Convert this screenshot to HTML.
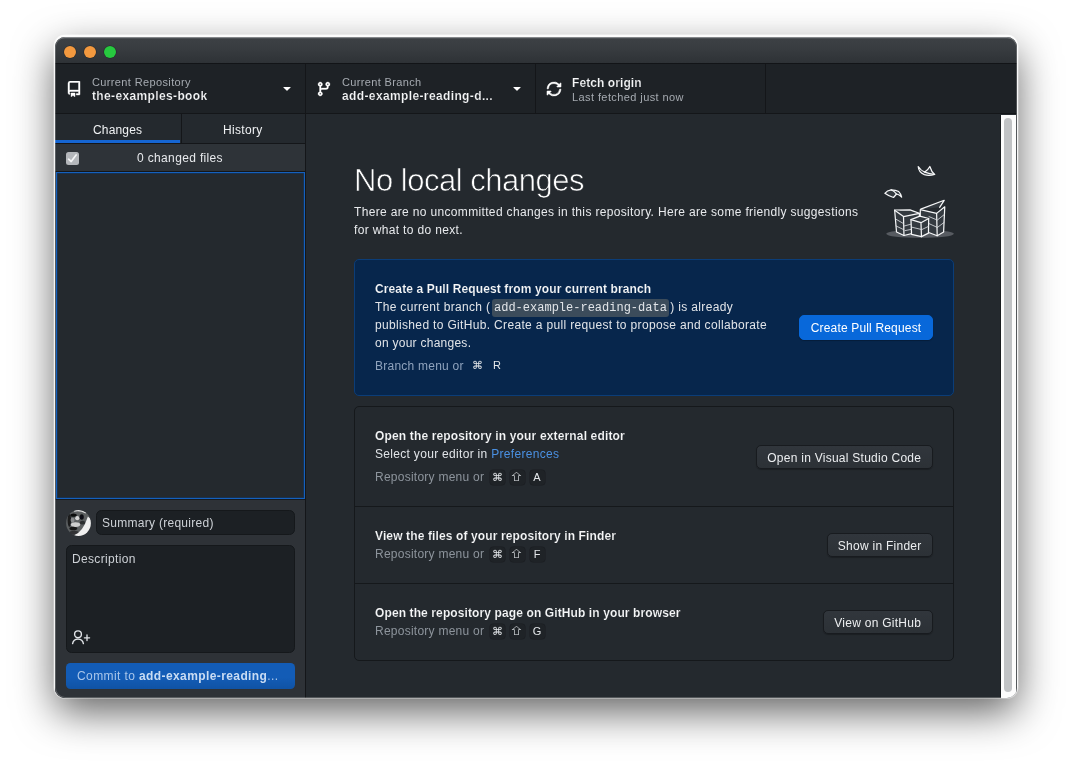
<!DOCTYPE html>
<html><head><meta charset="utf-8">
<style>
*{box-sizing:border-box;margin:0;padding:0}
html,body{width:1072px;height:772px;overflow:hidden;background:#fff}
body{font-family:"Liberation Sans",sans-serif;font-size:12px;color:#e1e4e8;position:relative}
.abs{position:absolute}
.t{position:absolute;white-space:nowrap;line-height:1}
#win{will-change:transform;position:absolute;left:55px;top:37px;width:962px;height:661px;border-radius:10px;background:#24292e;overflow:hidden;}
#shadow{position:absolute;left:55px;top:37px;width:962px;height:661px;border-radius:10px;box-shadow:0 -1.2px 0 1px rgba(255,255,255,.8),0 -.8px 0 1.6px rgba(255,255,255,.4),0 14px 40px rgba(0,0,0,.62)}
#titlebar{left:0;top:0;width:962px;height:27px;z-index:3;background:linear-gradient(#6a6e72 0,#5a5e62 1px,#3c4044 2px,#393d41 10px,#2e3236 100%);border-bottom:1.5px solid #121417}
.tl{position:absolute;top:8.7px;width:12.5px;height:12.5px;border-radius:50%;box-shadow:0 0 0 .5px rgba(0,0,0,.35)}
#toolbar{left:0;top:26px;width:962px;height:51px;background:#1e2226;border-bottom:1px solid #141619}
.sep{position:absolute;top:0;width:1px;height:50px;background:#141619}
.lbl{color:#a6abb1;font-size:11px}
.val{color:#f6f7f8;font-weight:bold;font-size:12px;-webkit-text-stroke:.18px #1e2226}

#tabs{left:0;top:77px;width:250px;height:29px;background:#24292e;border-bottom:1px solid #141619}
#main{left:250px;top:77px;width:696px;height:584px;background:#24292e;border-left:1px solid #141619}
#side{left:0;top:77px;width:250px;height:584px;background:#24292e}
#cf{left:0;top:30px;width:250px;height:28px;background:#2e3338;border-bottom:1px solid #141619}
#list{left:1px;top:58px;width:249px;height:327px;border:1px solid #1560bd;box-shadow:inset 0 0 0 .5px #0d3a70;background:#24292e}
.inp{position:absolute;background:#1c2024;border:1px solid #15181b;border-radius:5.5px}
.card{position:absolute;border-radius:5px}
.btn{position:absolute;height:25px;border-radius:5px;background:linear-gradient(#31363c,#2c3136);border:1px solid #181b1f;color:#eceef0;font-size:12px;text-align:center;line-height:23px;white-space:nowrap;box-shadow:0 1px 1px rgba(0,0,0,.25)}
.b{font-weight:bold;color:#f6f7f8;-webkit-text-stroke:.12px #24292e}
.sec{color:#8d949c}
kbd{font-family:"Liberation Sans",sans-serif;font-size:11px;color:#d1d5da}
.k{position:absolute;width:15px;height:15px;border-radius:3.5px;background:#1f2327;box-shadow:0 0 0 .5px #1a1d21;color:#e4e7ea;font-size:11px;line-height:15px;text-align:center}
.sh{display:inline-block;font-family:"Noto Sans CJK JP",sans-serif;font-size:9px;font-weight:bold;transform:translateY(-1px) scale(1.55,1.0);line-height:15px}
#sb{left:946px;top:78px;width:15px;height:583px;background:#fcfcfc;box-shadow:-1px 0 0 #191c1f}
#thumb{left:3px;top:3px;width:8px;height:574px;border-radius:4px;background:#c1c3c5}
#stroke{position:absolute;left:55px;top:37px;width:962px;height:661px;border-radius:10px;box-shadow:inset 0 0 0 1px rgba(255,255,255,.22);pointer-events:none;z-index:5}
</style></head><body>
<div id="shadow"></div>
<div id="win">
 <div id="titlebar" class="abs">
  <div class="tl" style="left:8.7px;background:#f3993f"></div>
  <div class="tl" style="left:28.7px;background:#f3993f"></div>
  <div class="tl" style="left:48.7px;background:#27c93f"></div>
 </div>
 <div id="toolbar" class="abs">
  <div class="sep" style="left:250px"></div>
  <div class="sep" style="left:480px"></div>
  <div class="sep" style="left:710px"></div>

  <svg class="abs" style="left:11px;top:18px" width="16" height="16" viewBox="0 0 16 16" fill="#fff" stroke="#fff" stroke-width=".4" stroke-linejoin="round"><path fill-rule="evenodd" d="M2 2.5A2.5 2.5 0 014.5 0h8.75a.75.75 0 01.75.75v12.5a.75.75 0 01-.75.75h-2.5a.75.75 0 110-1.5h1.75v-2h-8a1 1 0 00-.714 1.7.75.75 0 01-1.072 1.05A2.495 2.495 0 012 11.5v-9zm10.5-1V9h-8c-.356 0-.694.074-1 .208V2.5a1 1 0 011-1h8zM5 12.25v3.25a.25.25 0 00.4.2l1.45-1.087a.25.25 0 01.3 0L8.6 15.7a.25.25 0 00.4-.2v-3.25a.25.25 0 00-.25-.25h-3.5a.25.25 0 00-.25.25z"/></svg>
  <svg class="abs" style="left:224px;top:17px" width="16" height="16" viewBox="0 0 16 16" fill="#fff"><path d="M4.427 7.427l3.396 3.396a.25.25 0 00.354 0l3.396-3.396A.25.25 0 0011.396 7H4.604a.25.25 0 00-.177.427z"/></svg>
  <svg class="abs" style="left:261px;top:17.5px" width="16" height="16" viewBox="0 0 16 16" fill="#fff" stroke="#fff" stroke-width=".3" stroke-linejoin="round"><path fill-rule="evenodd" d="M11.75 2.5a.75.75 0 100 1.5.75.75 0 000-1.5zm-2.25.75a2.25 2.25 0 113 2.122V6A2.5 2.5 0 0110 8.5H6a1 1 0 00-1 1v1.128a2.251 2.251 0 11-1.5 0V5.372a2.25 2.25 0 111.5 0v1.836A2.492 2.492 0 016 7h4a1 1 0 001-1v-.628A2.25 2.25 0 019.5 3.25zM4.25 12a.75.75 0 100 1.5.75.75 0 000-1.5zM3.5 3.25a.75.75 0 111.5 0 .75.75 0 01-1.5 0z"/></svg>
  <svg class="abs" style="left:454px;top:17px" width="16" height="16" viewBox="0 0 16 16" fill="#fff"><path d="M4.427 7.427l3.396 3.396a.25.25 0 00.354 0l3.396-3.396A.25.25 0 0011.396 7H4.604a.25.25 0 00-.177.427z"/></svg>
  <svg class="abs" style="left:490.8px;top:17.7px;transform:scaleX(-1)" width="16" height="16" viewBox="0 0 16 16" fill="#fff" stroke="#fff" stroke-width=".55" stroke-linejoin="round"><path fill-rule="evenodd" d="M8 2.5a5.487 5.487 0 00-4.131 1.869l1.204 1.204A.25.25 0 014.896 6H1.25A.25.25 0 011 5.75V2.104a.25.25 0 01.427-.177l1.38 1.38A7.001 7.001 0 0114.95 7.16a.75.75 0 11-1.49.178A5.501 5.501 0 008 2.5zM1.705 8.005a.75.75 0 01.834.656 5.501 5.501 0 009.592 2.97l-1.204-1.204a.25.25 0 01.177-.427h3.646a.25.25 0 01.25.25v3.646a.25.25 0 01-.427.177l-1.38-1.38A7.001 7.001 0 011.05 8.84a.75.75 0 01.656-.834z"/></svg>
  <div class="t lbl" id="l1" style="letter-spacing:0.37px;left:37px;top:14px">Current Repository</div>
  <div class="t val" id="v1" style="letter-spacing:0.36px;left:37px;top:27px">the-examples-book</div>
  <div class="t lbl" id="l2" style="letter-spacing:0.35px;left:287px;top:14px">Current Branch</div>
  <div class="t val" id="v2" style="letter-spacing:0.375px;left:287px;top:27px">add-example-reading-d...</div>
  <div class="t val" id="v3" style="letter-spacing:0.08px;left:517px;top:14px">Fetch origin</div>
  <div class="t lbl" id="l3" style="letter-spacing:0.41px;left:517px;top:29px">Last fetched just now</div>
 </div>

 <div id="side" class="abs">
  <div id="tabsrow" class="abs" style="left:0;top:0;width:250px;height:30px;border-bottom:1px solid #141619">
   <div class="abs" style="left:125.5px;top:0;width:1px;height:29px;background:#141619"></div>
   <div class="abs" style="left:0;top:25.7px;width:125px;height:3.3px;background:#1565d2"></div>
   <div class="t" id="tab1" style="letter-spacing:0.17px;left:38px;top:10px;font-size:12px;color:#f0f2f4">Changes</div>
   <div class="t" id="tab2" style="letter-spacing:0.33px;left:168px;top:10px;font-size:12px;color:#f0f2f4">History</div>
  </div>
  <div id="cf" class="abs">
   <div class="abs" style="left:11px;top:8px;width:13px;height:13px;border-radius:2.5px;background:#b4b7bb"><svg class="abs" style="left:0;top:0" width="13" height="13" viewBox="0 0 13 13"><path d="M2.6 7.2l2.6 2.3 4.9-6.6" fill="none" stroke="#f4f5f6" stroke-width="1.7" stroke-linecap="round" stroke-linejoin="round"/></svg></div>
   <div class="t" id="cft" style="letter-spacing:0.35px;left:82px;top:8px;font-size:12px;color:#e8eaed">0 changed files</div>
  </div>
  <div id="list" class="abs"></div>
  <div class="abs" id="cmarea" style="left:0;top:385px;width:250px;height:199px;background:#2e3237;border-top:1px solid #181b1f"></div>
  <svg class="abs" id="avatar" style="left:11px;top:395.5px" width="25" height="26" viewBox="140 130 500 525">
   <defs><clipPath id="avc"><ellipse cx="390" cy="392" rx="250" ry="262"/></clipPath><filter id="avb" x="-20%" y="-20%" width="140%" height="140%"><feGaussianBlur stdDeviation="11"/></filter></defs>
   <g clip-path="url(#avc)"><g filter="url(#avb)">
    <rect x="100" y="100" width="600" height="600" fill="#5b5e61"/>
    <path d="M300 150Q420 120 540 190" stroke="#dcdcdc" stroke-width="30" fill="none"/>
    <ellipse cx="205" cy="340" rx="35" ry="130" fill="#1c1d1f"/>
    <ellipse cx="290" cy="235" rx="65" ry="32" fill="#0d0e0f"/>
    <ellipse cx="455" cy="270" rx="42" ry="55" fill="#101112"/>
    <ellipse cx="365" cy="295" rx="42" ry="42" fill="#d6d6d6"/>
    <ellipse cx="270" cy="330" rx="40" ry="45" fill="#8a8c8e"/>
    <ellipse cx="470" cy="385" rx="55" ry="40" fill="#2c2d2f"/>
    <ellipse cx="330" cy="425" rx="95" ry="50" fill="#cfcfcf"/>
    <ellipse cx="285" cy="505" rx="80" ry="36" fill="#151617"/>
    <ellipse cx="300" cy="590" rx="90" ry="40" fill="#303234"/>
    <path d="M290 645Q480 580 580 260Q680 330 650 480Q590 660 400 672Z" fill="#f0f0f0"/>
   </g></g></svg>
  <div class="inp" style="left:41px;top:396px;width:199px;height:25px"><div class="t" id="sum" style="letter-spacing:0.28px;left:5px;top:6px;font-size:12px;color:#cdd1d6">Summary (required)</div></div>
  <div class="inp" style="left:11px;top:431px;width:229px;height:108px"><div class="t" id="desc" style="letter-spacing:0.34px;left:5px;top:7px;font-size:12px;color:#cdd1d6">Description</div><svg class="abs" style="left:4px;top:83px" width="22" height="18" viewBox="0 0 22 18" fill="none" stroke="#e1e4e8" stroke-width="1.4" stroke-linecap="round"><circle cx="7" cy="5.3" r="3.4"/><path d="M1.6 14.6a5.5 5.5 0 0 1 10.8 0"/><path d="M13.4 8.8h5.2M16 6v5.6" stroke-width="1.3"/></svg></div>
  <div class="abs" id="commit" style="left:11px;top:549px;width:229px;height:26px;border-radius:4.5px;background:linear-gradient(#135cb6,#135cb6 55%,#1053a5);"><div class="t" id="ct" style="letter-spacing:0.4px;left:11px;top:6.8px;font-size:12px;color:#a9c6ea">Commit to <b style="color:#c9dcf3">add-example-reading</b>...</div></div>
 </div>
 <div id="main" class="abs">
  <div class="t" id="h1" style="letter-spacing:-.49px;left:48px;top:51px;font-size:31px;color:#fff;-webkit-text-stroke:.7px #24292e">No local changes</div>
  <div class="t" id="p1" style="letter-spacing:0.34px;left:48px;top:92px;font-size:12px;color:#e8eaed">There are no uncommitted changes in this repository. Here are some friendly suggestions</div>
  <div class="t" id="p2" style="letter-spacing:0.34px;left:48px;top:110px;font-size:12px;color:#e8eaed">for what to do next.</div>


  <svg class="abs" id="illo" style="left:570px;top:42px" width="88" height="90" viewBox="0 0 755 772" fill="none" stroke="#f6f7f8" stroke-width="10.5" stroke-linejoin="round" stroke-linecap="round">
   <ellipse cx="378" cy="668" rx="290" ry="34" fill="#575b61" stroke="none"/>
   <g fill="#343a40">
    <path d="M160 465L292 462L372 492L372 648L240 682L176 652Z"/>
    <path d="M160 465L236 520L372 492M236 520L240 682"/>
    <path d="M380 460L520 492L590 436L580 652L525 684L452 656L380 600Z"/>
    <path d="M520 492L525 684"/>
    <path d="M384 456L585 380L546 440" />
    <path d="M300 546L376 516L452 536L450 662L390 692L305 672Z"/>
    <path d="M300 546L386 572L452 536M386 572L390 692"/>
   </g>
   <g stroke-width="7" stroke="#dfe2e5">
    <path d="M168 540L236 580M172 600L238 632M244 600L300 585M250 640L300 630"/>
    <path d="M305 610L388 630M392 632L450 604"/>
    <path d="M455 520L522 548M455 580L524 612M528 548L586 502M528 612L584 570"/>
   </g>
   <path d="M362 90Q385 125 418 138Q450 115 462 90Q475 135 503 158Q455 172 415 160Q365 140 362 90Z" fill="#343a40"/>
   <path d="M418 138Q460 155 503 158"/>
   <path d="M76 320Q95 295 130 290Q170 292 195 305Q215 325 220 352Q200 330 176 326L150 356Q110 345 76 320Z" fill="#343a40"/>
   <path d="M130 290Q160 305 176 326"/>
  </svg>
  <div class="card" id="c1" style="left:48px;top:145px;width:600px;height:137px;background:#07264c;border:1px solid #0b3d78">
   <div class="t b" id="c1t" style="-webkit-text-stroke-color:#07264c;letter-spacing:0.12px;left:20px;top:23px">Create a Pull Request from your current branch</div>
   <div class="t" id="c1a" style="letter-spacing:0.33px;left:20px;top:41px">The current branch (<span id="code" style="font-family:'Liberation Mono',monospace;letter-spacing:0;font-size:12px;background:#3c4c5b;border-radius:3px;padding:2px 2px;margin:0 1.5px 0 1.7px">add-example-reading-data</span>) is already</div>
   <div class="t" id="c1b" style="letter-spacing:0.335px;left:20px;top:59px">published to GitHub. Create a pull request to propose and collaborate</div>
   <div class="t" id="c1c" style="letter-spacing:0.26px;left:20px;top:77px">on your changes.</div>
   <div class="t sec" id="c1d" style="letter-spacing:0.24px;left:20px;top:100px;color:#8fa3bd">Branch menu or</div>
   <div class="t" style="left:117px;top:100px;color:#e4e7ea;font-size:11px">⌘</div>
   <div class="t" style="left:138px;top:100px;color:#e4e7ea;font-size:11px">R</div>
   <div class="btn" style="left:444px;top:55px;width:134px;background:#0868da;border-color:#0868da;color:#fff;letter-spacing:.17px;line-height:25px">Create Pull Request</div>
  </div>

  <div class="card" id="c2" style="left:48px;top:292px;width:600px;height:255px;border:1px solid #15181b;background:#24292e">
   <div class="abs" style="left:0;top:99px;width:598px;height:1px;background:#15181b"></div>
   <div class="abs" style="left:0;top:176px;width:598px;height:1px;background:#15181b"></div>
   <div class="t b" id="c2t" style="letter-spacing:0.15px;left:20px;top:23px">Open the repository in your external editor</div>
   <div class="t" id="c2a" style="letter-spacing:0.31px;left:20px;top:41px">Select your editor in <span style="color:#4a90e2">Preferences</span></div>
   <div class="t sec" id="c2b" style="letter-spacing:0.25px;left:20px;top:64px">Repository menu or</div>
   <div class="k" style="left:135px;top:62.5px">⌘</div><div class="k" style="left:154.5px;top:62.5px"><span class="sh">⇧</span></div><div class="k" style="left:174.5px;top:62.5px">A</div>
   <div class="btn" style="left:401px;top:37.5px;width:176.5px;height:24px;line-height:24px;letter-spacing:.26px">Open in Visual Studio Code</div>

   <div class="t b" id="c3t" style="letter-spacing:0.12px;left:20px;top:123px">View the files of your repository in Finder</div>
   <div class="t sec" id="c3b" style="letter-spacing:0.25px;left:20px;top:141px">Repository menu or</div>
   <div class="k" style="left:135px;top:139.5px">⌘</div><div class="k" style="left:154.5px;top:139.5px"><span class="sh">⇧</span></div><div class="k" style="left:174.5px;top:139.5px">F</div>
   <div class="btn" style="left:471.6px;top:126px;width:106.2px;height:24px;line-height:24px;letter-spacing:.26px">Show in Finder</div>

   <div class="t b" id="c4t" style="letter-spacing:0.11px;left:20px;top:200px">Open the repository page on GitHub in your browser</div>
   <div class="t sec" id="c4b" style="letter-spacing:0.25px;left:20px;top:218px">Repository menu or</div>
   <div class="k" style="left:135px;top:216.5px">⌘</div><div class="k" style="left:154.5px;top:216.5px"><span class="sh">⇧</span></div><div class="k" style="left:174.5px;top:216.5px">G</div>
   <div class="btn" style="left:467.8px;top:203px;width:109.8px;height:24px;line-height:24px;letter-spacing:.26px">View on GitHub</div>
  </div>
 </div>
 <div id="sb" class="abs"><div id="thumb" class="abs"></div></div>
</div>
<div id="stroke"></div>
</body></html>
